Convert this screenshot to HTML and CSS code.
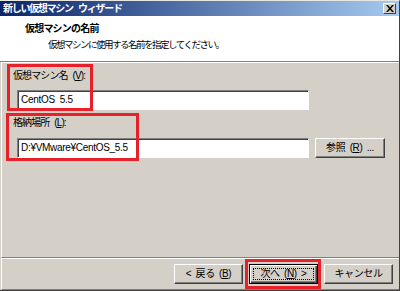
FILE: index.html
```html
<!DOCTYPE html>
<html lang="ja">
<head>
    <meta charset="UTF-8">
    <title>新しい仮想マシン ウィザード</title>
    <link rel="stylesheet" href="styles.css">
</head>
<body>
    <div class="window">
        <!-- Title bar -->
        <div class="titlebar">
            <span class="title">新しい仮想マシン ウィザード</span>
            <span class="close-btn">
                <svg width="8" height="7" viewBox="0 0 8 7">
                    <path d="M0 0h2l2 2.5 2-2.5h2l-3 3.5 3 3.5h-2l-2-2.5-2 2.5h-2l3-3.5z" fill="#000"/>
                </svg>
            </span>
        </div>

        <!-- Header -->
        <div class="header">
            <div class="header-title">仮想マシンの名前</div>
            <div class="header-sub">仮想マシンに使用する名前を指定してください。</div>
        </div>

        <!-- Form -->
        <div class="content">
            <div class="group">
                <div class="label">仮想マシン名 (<u>V</u>):</div>
                <div class="row">
                    <div class="textbox">CentOS&nbsp;&nbsp;5.5</div>
                </div>
            </div>
            <div class="group group-location">
                <div class="label">格納場所 (<u>L</u>):</div>
                <div class="row">
                    <div class="textbox">D:¥VMware¥CentOS_5.5</div>
                    <div class="button browse-btn">参照 (<u>R</u>) ...</div>
                </div>
            </div>

            <!-- Annotation boxes -->
            <div class="mark mark-name"></div>
            <div class="mark mark-location"></div>
        </div>

        <!-- Buttons -->
        <div class="footer">
            <div class="button">&lt; 戻る (<u>B</u>)</div>
            <div class="button default-btn"><span class="focus">次へ (<u>N</u>) &gt;</span></div>
            <div class="button">キャンセル</div>
            <div class="mark mark-next"></div>
        </div>
    </div>
</body>
</html>
```

FILE: styles.css
```css
* {
    margin: 0;
    padding: 0;
    box-sizing: border-box;
}

body {
    width: 400px;
    height: 291px;
    background: #D4D0C8;
    font-family: 'Liberation Sans', 'Noto Sans CJK JP', sans-serif;
    font-size: 10px;
    color: #000;
    overflow: hidden;
}

.window {
    width: 400px;
    height: 291px;
    border-top: 1px solid #E8E6E1;
    border-right: 1px solid #404040;
    border-bottom: 1px solid #404040;
    display: flex;
    flex-direction: column;
}

.titlebar {
    height: 15px;
    background: linear-gradient(90deg, #0A246A, #A6CAF0);
    display: flex;
    align-items: center;
    justify-content: space-between;
    padding: 0 3px 0 3px;
}

.title {
    color: #fff;
    font-weight: bold;
    font-size: 10px;
    letter-spacing: -1.3px;
    word-spacing: 4px;
    line-height: 12px;
}

.close-btn {
    width: 13px;
    height: 11px;
    background: #D4D0C8;
    border: 1px solid;
    border-color: #fff #404040 #404040 #fff;
    display: flex;
    align-items: center;
    justify-content: center;
}

.header {
    height: 46px;
    background: #fff;
    padding: 7px 0 0 25px;
    border-bottom: 1px solid #808080;
}

.header-title {
    font-weight: bold;
    line-height: 12px;
    letter-spacing: -0.8px;
}

.header-sub {
    margin: 4px 0 0 23px;
    font-size: 9.5px;
    line-height: 12px;
    letter-spacing: -1.5px;
}

.content {
    position: relative;
    flex: 1;
    border-top: 1px solid #fff;
    border-left: 1px solid #fff;
    margin-left: 1px;
    border-bottom: 1px solid #808080;
    padding: 7px 0 0 11px;
}

.label {
    line-height: 12px;
    letter-spacing: -0.9px;
    word-spacing: 3px;
}

.row {
    display: flex;
    gap: 6px;
    margin: 8px 0 0 4px;
}

.group-location {
    margin-top: 7px;
}

.group-location .row {
    margin-top: 9px;
}

.textbox {
    width: 292px;
    height: 20px;
    background: #fff;
    border: 1px solid;
    border-color: #808080 #fff #fff #808080;
    box-shadow: inset 1px 1px 0 #404040;
    padding: 3px 0 0 3px;
    line-height: 12px;
    letter-spacing: -0.3px;
}

.button {
    width: 69px;
    height: 20px;
    background: #D4D0C8;
    border: 1px solid;
    border-color: #fff #404040 #404040 #fff;
    box-shadow: inset -1px -1px 0 #808080;
    display: flex;
    align-items: center;
    justify-content: center;
    line-height: 12px;
    letter-spacing: -0.4px;
    word-spacing: 2px;
}

.browse-btn {
    width: 70px;
}

.default-btn {
    border: 1px solid #000;
    box-shadow: inset 1px 1px 0 #fff, inset -1px -1px 0 #404040, inset -2px -2px 0 #808080;
    padding: 3px;
}

.focus {
    flex: 1;
    align-self: stretch;
    border: 1px dotted #000;
    display: flex;
    align-items: center;
    justify-content: center;
}

.footer {
    position: relative;
    height: 32px;
    border-top: 1px solid #fff;
    border-left: 1px solid #fff;
    margin-left: 1px;
    border-bottom: 1px solid #808080;
    display: flex;
    justify-content: flex-end;
    gap: 6px;
    padding: 5px 6px 0 0;
}

/* red annotation boxes */
.mark {
    position: absolute;
    border: 3px solid #E8202A;
}

.mark-name {
    left: 5px;
    top: 1px;
    width: 86px;
    height: 47px;
}

.mark-location {
    left: 4px;
    top: 50px;
    width: 133px;
    height: 48px;
}

.mark-next {
    left: 243px;
    top: 0px;
    width: 76px;
    height: 30px;
}
```
